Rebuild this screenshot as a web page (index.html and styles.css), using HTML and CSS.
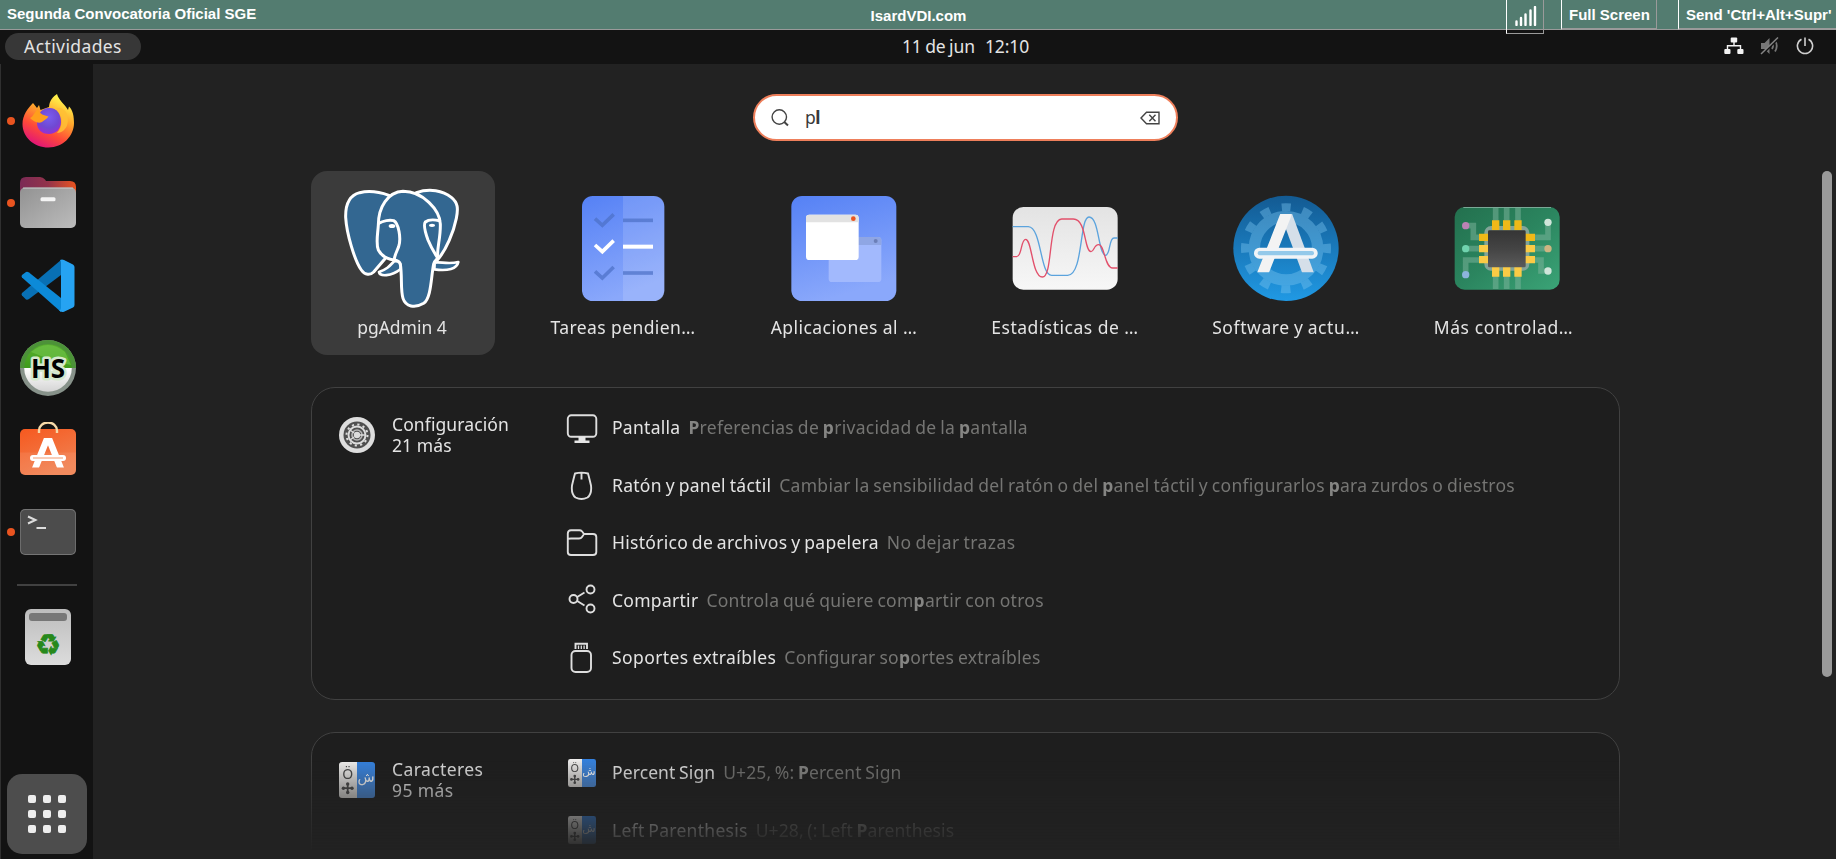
FILE: index.html
```html
<!DOCTYPE html>
<html lang="es">
<head>
<meta charset="utf-8">
<title>IsardVDI.com</title>
<link rel="stylesheet" href="styles.css">
</head>
<body>
<svg class="defs" width="0" height="0">
  <defs>
    <linearGradient id="blue" x1="0" y1="0" x2="0.3" y2="1"><stop offset="0" stop-color="#5581f5"/><stop offset="1" stop-color="#8aa8fb"/></linearGradient>
    <linearGradient id="orange" x1="0" y1="0" x2="0.5" y2="1"><stop offset="0" stop-color="#f6591f"/><stop offset="1" stop-color="#f08050"/></linearGradient>
    <linearGradient id="ff" x1="0.8" y1="0" x2="0.3" y2="1"><stop offset="0.1" stop-color="#fff04a"/><stop offset="0.4" stop-color="#ffa52c"/><stop offset="0.7" stop-color="#ff4a38"/><stop offset="1" stop-color="#e0127c"/></linearGradient>
    <radialGradient id="ffc" cx="0.5" cy="0.35" r="0.7"><stop offset="0" stop-color="#7a5cf0"/><stop offset="0.6" stop-color="#6f49d2"/><stop offset="1" stop-color="#a02ad0"/></radialGradient>
    <linearGradient id="folder" x1="0" y1="0" x2="1" y2="0"><stop offset="0" stop-color="#7b2a55"/><stop offset="0.5" stop-color="#93334b"/><stop offset="1" stop-color="#e95420"/></linearGradient>
    <linearGradient id="grey" x1="0" y1="0" x2="1" y2="1"><stop offset="0" stop-color="#929292"/><stop offset="1" stop-color="#bcbcbc"/></linearGradient>
    <linearGradient id="bin" x1="0" y1="0" x2="0" y2="1"><stop offset="0" stop-color="#bdbdbd"/><stop offset="1" stop-color="#dcdcdc"/></linearGradient>
    <linearGradient id="green" x1="0" y1="0" x2="0" y2="1"><stop offset="0" stop-color="#57b02c"/><stop offset="0.5" stop-color="#3f9a1c"/><stop offset="0.5" stop-color="#ffffff"/><stop offset="1" stop-color="#d4d4d4"/></linearGradient>
    <linearGradient id="sw" x1="0" y1="0" x2="0" y2="1"><stop offset="0" stop-color="#135a92"/><stop offset="1" stop-color="#2099e4"/></linearGradient>
    <linearGradient id="pcb" x1="0" y1="0" x2="1" y2="1"><stop offset="0" stop-color="#23704e"/><stop offset="0.5" stop-color="#2b855f"/><stop offset="1" stop-color="#3ba477"/></linearGradient>
    <linearGradient id="chip" x1="0" y1="0" x2="0" y2="1"><stop offset="0" stop-color="#353535"/><stop offset="0.5" stop-color="#444"/><stop offset="1" stop-color="#5a5a5a"/></linearGradient>
    <linearGradient id="stat" x1="0" y1="0" x2="0" y2="1"><stop offset="0" stop-color="#e3e3e3"/><stop offset="1" stop-color="#f7f7f7"/></linearGradient>
    <linearGradient id="cw" x1="0" y1="0" x2="0" y2="1"><stop offset="0" stop-color="#f6f5f4"/><stop offset="1" stop-color="#d0cecb"/></linearGradient>
    <linearGradient id="cb" x1="0" y1="0" x2="0" y2="1"><stop offset="0" stop-color="#3584e4"/><stop offset="1" stop-color="#4a86d0"/></linearGradient>
    <clipPath id="legs"><rect x="190" y="162" width="200" height="175"/></clipPath>
    <clipPath id="bag"><rect x="5" y="16" width="46" height="29.500"/></clipPath>
    <symbol id="chars" viewBox="0 0 36 36">
      <path d="M18 0H3Q0 0 0 3V33Q0 36 3 36H18Z" fill="url(#cw)"/><path d="M18 0H33Q36 0 36 3V33Q36 36 33 36H18Z" fill="url(#cb)"/>
      <text x="8.700" y="16.500" font-size="14" text-anchor="middle" fill="#4a4a4a" font-family="Noto Sans">Ö</text>
      <text x="27" y="20" font-size="14" text-anchor="middle" fill="#fff" font-family="DejaVu Sans">ش</text>
      <path d="M8.700 21.500V31M4 26.200H13.500" stroke="#4a4a4a" stroke-width="1.800"/><g fill="#4a4a4a"><circle cx="8.700" cy="22" r="1.700"/><circle cx="8.700" cy="30.500" r="1.700"/><circle cx="4.400" cy="26.200" r="1.700"/><circle cx="13" cy="26.200" r="1.700"/></g>
    </symbol>
  </defs>
</svg>

<header class="viewer-bar">
  <span class="viewer-name">Segunda Convocatoria Oficial SGE</span>
  <span class="viewer-title">IsardVDI.com</span>
  <div class="viewer-actions">
    <span class="signal"><svg width="22" height="20" viewBox="0 0 22 20"><path d="M1.500 19V15.500M6 19V12M10.500 19V8.500M15.500 19V4.500M20 19V1" stroke="#fff" stroke-width="2.400" stroke-linecap="round"/></svg></span>
    <span class="vbtn vbtn-full">Full Screen</span>
    <span class="vbtn vbtn-send">Send 'Ctrl+Alt+Supr'</span>
  </div>
</header>

<nav class="panel">
  <span class="activities">Actividades</span>
  <span class="clock"><span>11 de jun</span><span>12:10</span></span>
  <span class="status">
    <svg width="20" height="18" viewBox="0 0 20 18"><g fill="#f2f2f2"><rect x="6.700" y="0.500" width="6.500" height="5" rx="1"/><rect x="0.300" y="12" width="6.200" height="5" rx="1"/><rect x="13.300" y="12" width="6.200" height="5" rx="1"/></g><path d="M10 5V8.700M3.500 12V8.700H16.500V12" fill="none" stroke="#f2f2f2" stroke-width="1.400"/></svg>
    <svg width="20" height="18" viewBox="0 0 20 18"><path d="M1 6H4.500L9.500 1V17L4.500 12H1Z" fill="#777"/><path d="M12 6Q14 9 12 12M15 3.500Q18.500 9 15 14.500" fill="none" stroke="#777" stroke-width="1.800"/><path d="M2 17.500L18.500 1.500" stroke="#131313" stroke-width="2"/><path d="M1 17L18 0.500" stroke="#858585" stroke-width="1.500"/></svg>
    <svg width="18" height="18" viewBox="0 0 18 18"><path d="M5.500 2.200A7.600 7.600 0 1 0 12.500 2.200M9 0.500V9" fill="none" stroke="#cfcfcf" stroke-width="1.600"/></svg>
  </span>
</nav>

<div class="desktop">
  <aside class="dock">
    <div class="dock-item running"><svg width="56" height="56" viewBox="0 0 56 56">
      <path d="M37 1C30 6 29.500 10 29 14L20.500 17L19 12L17 15L13 10C8 15 2.500 22 2.500 31C2.500 44 14 54.500 28.500 54.500C43 54.500 54 43 54 30C54 24 53 17 49 13.500L48 17C45 11 39 8 37 1Z" fill="url(#ff)"/>
      <path d="M28 15C36 14 41 20 41 29C41 36 36 41 29 41C21 41 17 36 17 30C18 22 20 16 28 15Z" fill="url(#ffc)"/>
      <path d="M18 16C20 22 24 22 28.500 23.500C27 26 24 27 22 29C18 31 13 28 10 25C14 23 14 19 18 16Z" fill="#ff9f1c"/><path d="M35 16C44 21 43 34 37 40C48 39 50 27 46 19C42 14 39 14 35 16Z" fill="#ffbf35" opacity=".85"/></svg></div>
    <div class="dock-item running"><svg width="56" height="56" viewBox="0 0 56 56"><path d="M0 8Q0 2 6 2H20Q23 2 25 4.500L26 6H50Q56 6 56 12V30H0Z" fill="url(#folder)"/><rect x="0" y="12.500" width="56" height="40.500" rx="5" fill="url(#grey)"/><path d="M3 13.100H53" stroke="#c8c8c8"/><rect x="20.500" y="22.300" width="15" height="4" rx="1.500" fill="#f4f4f4"/></svg></div>
    <div class="dock-item"><svg width="56" height="56" viewBox="0 0 56 56"><path d="M41 2L2 35Q1 36 2 37.500L6 41.500Q7.500 42 9 41L41 17Z" fill="#0870b5"/><path d="M41 54L2 19.500Q1 18 2 17L6 14Q7.500 13.500 9 14.500L41 40Z" fill="#0c8ad8"/><path d="M40 2Q42 1 44 2L53 6.500Q54.500 7.500 54.500 9V47Q54.500 48.500 53 49.500L44 53.700Q41 54.500 39 52.500Q41 52 41 50V5Q41 3 40 2Z" fill="#26a3f2"/></svg></div>
    <div class="dock-item"><svg width="56" height="56" viewBox="0 0 56 56"><circle cx="28" cy="28" r="28" fill="#87928a"/><path d="M0 28A28 28 0 0 1 56 28Z" fill="#4c9238"/><circle cx="28" cy="28" r="23.800" fill="url(#green)"/><path d="M11 12Q28 -2 45 12L51 25Q35 22 11 12Z" fill="#73c44d" opacity=".6"/><text x="28" y="37.500" text-anchor="middle" font-family="Open Sans" font-weight="700" font-size="26" fill="#000" stroke="#d5e8cd" stroke-width="5" stroke-linejoin="round" paint-order="stroke">HS</text></svg></div>
    <div class="dock-item"><svg width="56" height="56" viewBox="0 0 56 56"><rect y="7" width="56" height="46" rx="5" fill="url(#orange)"/><path d="M0 30.500H56V48Q56 53 51 53H5Q0 53 0 48Z" fill="#fff" opacity=".08"/><path d="M19 11V8.500A9 8 0 0 1 37 8.500V11" fill="none" stroke="#f5d9a8" stroke-width="2.400"/><g clip-path="url(#bag)"><path d="M15 47L27 17H29L41 47" fill="none" stroke="#fff" stroke-width="6.500" stroke-linejoin="bevel"/></g><path d="M13 36H43" stroke="#fff" stroke-width="6" stroke-linecap="round"/><path d="M13 36H43" stroke="#f7b89a" stroke-width="1.400"/></svg></div>
    <div class="dock-item running"><svg width="56" height="56" viewBox="0 0 56 56"><rect y="5" width="56" height="46" rx="5" fill="#757575"/><rect x=".8" y="6" width="54.400" height="44" rx="4.500" fill="#4c4c4c"/><path d="M8 12.500L15.500 16L8 19.500" fill="none" stroke="#dcdcdc" stroke-width="2"/><path d="M16.500 24H26" stroke="#dcdcdc" stroke-width="2"/></svg></div>
    <div class="dock-sep"></div>
    <div class="dock-item trash"><svg width="56" height="56" viewBox="0 0 56 56"><rect x="5" width="46" height="56" rx="6" fill="url(#bin)"/><rect x="9" y="4" width="38" height="8" rx="3" fill="#777"/><text x="28" y="45.500" text-anchor="middle" font-family="DejaVu Sans" font-size="29" fill="#26891b" stroke="#26891b" stroke-width=".8">♻</text></svg></div>
    <div class="apps-button"><svg width="38" height="38" viewBox="0 0 38 38" fill="#eee"><rect width="8" height="8" rx="2"/><rect x="15" width="8" height="8" rx="2"/><rect x="30" width="8" height="8" rx="2"/><rect y="15" width="8" height="8" rx="2"/><rect x="15" y="15" width="8" height="8" rx="2"/><rect x="30" y="15" width="8" height="8" rx="2"/><rect y="30" width="8" height="8" rx="2"/><rect x="15" y="30" width="8" height="8" rx="2"/><rect x="30" y="30" width="8" height="8" rx="2"/></svg></div>
  </aside>

  <main class="overview">
    <div class="search">
      <svg width="18" height="18" viewBox="0 0 18 18" fill="none" stroke="#444" stroke-width="1.400"><circle cx="8.300" cy="8" r="7.200"/><path d="M13 12.700L17 16.500" stroke-width="2"/></svg>
      <span class="query">p<b>l</b></span>
      <svg width="20" height="14" viewBox="0 0 20 14" fill="none" stroke="#444" stroke-width="1.400"><path d="M1 7L6.500 1.200H19V12.800H6.500Z"/><path d="M9.300 3.700L15.500 10.300M15.500 3.700L9.300 10.300"/></svg>
    </div>

    <div class="results">
      <div class="apps">
        <div class="app selected"><svg width="120" height="120" viewBox="127 84 360 360" fill="#336791" stroke="#fff" stroke-width="9" stroke-linejoin="round" stroke-linecap="round">
          <path d="M268 106C240 96 205 92 180 98C150 106 137 130 138 172C141 222 165 302 185 330C196 346 212 346 222 336L256 296L300 200Z"/>
          <path d="M350 98C390 84 430 92 455 112C475 128 476 145 470 175C462 215 440 270 413 300L380 200Z"/>
          <path d="M302 312C308 350 302 390 310 415C318 440 345 446 372 430C395 415 394 350 402 312C408 295 415 300 414 290C412 260 423 235 422 192C420 150 370 94 310 94C265 96 236 140 236 195C234 225 228 250 236 270C246 288 260 298 285 300C295 302 300 306 302 312Z"/>
          <path d="M238 190C250 182 270 179 282 182C297 190 305 235 297 260C290 278 284 288 284 298" fill="none"/>
          <path d="M420 182C405 179 385 179 377 186C370 195 376 215 385 240C394 262 405 280 414 294" fill="none"/>
          <path d="M283 304C270 318 262 328 238 336C240 350 275 350 302 328C304 308 298 302 283 304Z" stroke-width="8"/>
          <path d="M405 308C420 304 445 314 476 306C472 326 445 334 404 328Z" stroke-width="8"/>
          <g fill="#fff" stroke="none"><ellipse cx="277" cy="198" rx="10" ry="6"/><ellipse cx="397" cy="196" rx="9" ry="5"/></g></svg>
          <span>pgAdmin 4</span></div>
        <div class="app"><svg width="120" height="120" viewBox="789 84 360 360"><rect x="846" y="108" width="247" height="315" rx="32" fill="url(#blue)"/><path d="M969 108H1061Q1093 108 1093 140V391Q1093 423 1061 423H969Z" fill="#fff" opacity=".13"/>
          <g fill="none" stroke-width="11"><g stroke="#4c70c6" opacity=".7"><path d="M885 176L907 196L941 163"/><path d="M969 181H1059"/><path d="M885 334L907 354L941 321"/><path d="M969 339H1059"/></g><g stroke="#fff"><path d="M885 255L907 275L941 242"/><path d="M969 260H1059" stroke-width="12"/></g></g></svg>
          <span class="cut-2">Tareas pendien…</span></div>
        <div class="app"><svg width="120" height="120" viewBox="133 324 360 360"><rect x="155" y="348" width="315" height="315" rx="32" fill="url(#blue)"/><rect x="267" y="471" width="158" height="135" rx="10" fill="#a2b9fd"/><path d="M267 495V481Q267 471 277 471H415Q425 471 425 481V495Z" fill="#8fa6e4"/><circle cx="408" cy="483" r="6" fill="#6b7fb8"/><rect x="199" y="404" width="158" height="136" rx="10" fill="#fff"/><path d="M199 427V414Q199 404 209 404H347Q357 404 357 414V427Z" fill="#e2e2e2"/><circle cx="341" cy="416" r="7" fill="#e95420"/></svg>
          <span class="cut-3">Aplicaciones al …</span></div>
        <div class="app"><svg width="120" height="120" viewBox="795 324 360 360" fill="none" stroke-width="4"><rect x="818" y="381" width="315" height="248" rx="32" fill="url(#stat)"/><path d="M818 440H865C905 442 900 586 935 586H983C1030 586 1018 411 1047 411C1078 411 1074 524 1097 526C1112 524 1106 474 1122 474H1133" stroke="#5ba3dd"/><path d="M818 530H830C846 530 842 478 857 478C876 478 876 591 907 591C940 591 922 420 965 417H1000C1040 417 1032 514 1053 515C1062 515 1062 494 1076 494C1094 494 1094 564 1118 564H1133" stroke="#e2506b"/></svg>
          <span class="cut-4">Estadísticas de …</span></div>
        <div class="app"><svg width="120" height="120" viewBox="109 84 360 360"><circle cx="289" cy="265" r="158" fill="url(#sw)"/>
          <g opacity=".42" fill="none" stroke="#79c4f0"><circle cx="289" cy="265" r="95" stroke-width="34"/><circle cx="289" cy="265" r="123" stroke-width="24" stroke-dasharray="28 36.400" stroke-dashoffset="14" transform="rotate(-90 289 265)"/></g>
          <g clip-path="url(#legs)"><path d="M358 346L292 168" stroke="#d5dfe9" stroke-width="33"/><path d="M217 346L287 168L293 150" fill="none" stroke="#f3f3f3" stroke-width="33"/></g><rect x="193" y="263" width="191" height="33" rx="16" fill="#f1f4f7"/><rect x="204" y="273" width="169" height="13" rx="6" fill="#94c9ea"/></svg>
          <span class="cut-5">Software y actu…</span></div>
        <div class="app"><svg width="120" height="120" viewBox="772 84 360 360"><rect x="795" y="141" width="315" height="248" rx="30" fill="url(#pcb)"/><path d="M821 142.500H1084" stroke="#79a996" stroke-width="3"/>
          <g fill="none" stroke="#80b59e" stroke-opacity=".5" stroke-width="17"><path d="M918 143V190M951 143V190M985 143V190M918 345V387M951 345V387M985 345V387M828 197H851V232H880M828 266H880M828 344V300H880M1075 187V232H1025M1075 266H1025M1075 333H1054V300H1025"/></g>
          <rect x="884" y="198" width="135" height="134" rx="20" fill="#83a498"/><path d="M907 181h22v30h-22zM940 181h22v30h-22zM974 181h22v30h-22zM868 221h30v22h-30zM1006 221h30v22h-30z" fill="#efb918"/><path d="M907 320h22v30h-22zM940 320h22v30h-22zM974 320h22v30h-22zM868 255h30v22h-30zM868 288h30v22h-30zM1006 255h30v22h-30zM1006 288h30v22h-30z" fill="#fbcb45"/><rect x="895" y="211" width="113" height="111" rx="4" fill="url(#chip)"/>
          <circle cx="828" cy="197" r="11" fill="#bd82b5"/><circle cx="828" cy="266" r="11" fill="#70d3ae"/><circle cx="828" cy="344" r="11" fill="#8db4dc"/><circle cx="1075" cy="187" r="11" fill="#d0e5da"/><circle cx="1075" cy="266" r="11" fill="#cdb582"/><circle cx="1075" cy="333" r="11" fill="#d0e5da"/></svg>
          <span class="cut-6">Más controlad…</span></div>
      </div>

      <section class="card">
        <div class="provider">
          <svg width="36" height="36" viewBox="0 0 36 36"><circle cx="18" cy="18" r="18" fill="#dedede"/><circle cx="18" cy="18" r="13.500" fill="#4f4f4f"/><g fill="none" stroke="#dcdcdc"><circle cx="18" cy="18" r="8.500" stroke-width="1.900"/><circle cx="18" cy="18" r="10.500" stroke-width="2" stroke-dasharray="2.200 3.298"/><circle cx="18" cy="18" r="5" stroke-width="1.600" stroke="#b5b5b5"/><path d="M11 13L15 16M11 23L15 20M21 18H26" stroke-width="1.300"/></g><circle cx="18" cy="18" r="3.200" fill="#dcdcdc"/></svg>
          <div class="provider-name"><div>Configuración</div><div>21 más</div></div>
        </div>
        <ul class="rows">
          <li><svg width="32" height="32" viewBox="0 0 32 32"><rect x="1.800" y="3.300" width="28.500" height="21.500" rx="3.500" fill="none" stroke="#dedede" stroke-width="1.900"/><path d="M12.500 25H19.500V28.500H23.500V31H8.500V28.500H12.500Z" fill="#e6e6e6"/></svg><span class="name">Pantalla</span><span class="desc"><b>P</b>referencias de <b>p</b>rivacidad de la <b>p</b>antalla</span></li>
          <li><svg width="32" height="32" viewBox="0 0 32 32" fill="none" stroke="#dedede" stroke-width="1.900"><path d="M9 4.500Q15.500 2.700 22 4.500Q23 8 25 16.500Q26 25 21.500 28.500Q15.500 31.500 9.500 28.500Q5 25 6 16.500Q8 8 9 4.500ZM15.500 4V10.500"/></svg><span class="name">Ratón y panel táctil</span><span class="desc">Cambiar la sensibilidad del ratón o del <b>p</b>anel táctil y configurarlos <b>p</b>ara zurdos o diestros</span></li>
          <li><svg width="32" height="32" viewBox="0 0 32 32" fill="none" stroke="#dedede" stroke-width="1.900"><path d="M1.800 9V25Q1.800 28 5 28H27Q30.300 28 30.300 25V10Q30.300 7 27 7H18L16 4.300Q15 3.300 13.500 3.300H5Q1.800 3.300 1.800 6.500V12Q2.500 11.500 5 11.500H13Q15 11.500 16 10L18 7"/></svg><span class="name">Histórico de archivos y papelera</span><span class="desc wide">No dejar trazas</span></li>
          <li><svg width="32" height="32" viewBox="0 0 32 32" fill="none" stroke="#dedede" stroke-width="1.900"><circle cx="7.500" cy="15" r="4"/><circle cx="24.500" cy="5.500" r="4"/><circle cx="24.500" cy="24.500" r="4"/><path d="M11.200 13L18.500 8.500M11.200 17L18.500 21.500"/></svg><span class="name">Compartir</span><span class="desc">Controla qué quiere com<b>p</b>artir con otros</span></li>
          <li><svg width="32" height="32" viewBox="0 0 32 32" fill="none" stroke="#dedede" stroke-width="1.900"><rect x="5.500" y="9" width="19.500" height="21" rx="4"/><path d="M9.500 7V1.700H21V7"/><path d="M12.500 3.500V7M15.300 3.500V7M18.100 3.500V7" stroke-width="1.300"/></svg><span class="name wide">Soportes extraíbles</span><span class="desc">Configurar so<b>p</b>ortes extraíbles</span></li>
        </ul>
      </section>

      <section class="card">
        <div class="provider">
          <svg width="36" height="36"><use href="#chars" width="36" height="36"/></svg>
          <div class="provider-name wide"><div>Caracteres</div><div>95 más</div></div>
        </div>
        <ul class="rows">
          <li><svg width="32" height="28"><use href="#chars" x="2" width="28" height="28"/></svg><span class="name tight">Percent Sign</span><span class="desc tight">U+25, %: <b>P</b>ercent Sign</span></li>
          <li><svg width="32" height="28"><use href="#chars" x="2" width="28" height="28"/></svg><span class="name">Left Parenthesis</span><span class="desc tight">U+28, (: Left <b>P</b>arenthesis</span></li>
        </ul>
      </section>
    </div>
    <div class="scrollbar"></div>
  </main>
</div>
</body>
</html>
```
FILE: styles.css
```css
* { box-sizing: border-box; }
body {
  margin: 0;
  width: 1836px;
  height: 859px;
  overflow: hidden;
  background: #131313;
  color: #e4e4e4;
  font: 17.5px/21px "Noto Sans", sans-serif;
  display: flex;
  flex-direction: column;
}
svg { display: block; flex: none; }
.defs { position: absolute; }

/* remote viewer bar */
.viewer-bar {
  flex: none;
  height: 30px;
  display: grid;
  grid-template-columns: 1fr auto 1fr;
  background: #537c70;
  border-bottom: 1px solid #9a9a9a;
  color: #fff;
  font: bold 15px/17px "Liberation Sans", Arial, sans-serif;
}
.viewer-name { padding: 5px 0 0 7px; }
.viewer-title { padding: 7px 0 0 1px; }
.viewer-actions { display: flex; justify-content: flex-end; }
.signal {
  width: 38px;
  height: 34px;
  margin-right: 17px;
  padding: 6px 0 0 8px;
  border: solid #9a9a9a;
  border-width: 0 1px 1px;
  border-left-color: #fff;
  position: relative;
}
.vbtn {
  height: 30px;
  padding: 6px 0 0 7px;
  border: solid #9a9a9a;
  border-width: 0 1px 2px;
  border-left-color: #fff;
  white-space: nowrap;
}
.vbtn-full { width: 96px; margin-right: 21px; }
.vbtn-send { width: 158px; border-right: 0; }

/* desktop top panel */
.panel {
  flex: none;
  height: 34px;
  display: grid;
  grid-template-columns: 141px 1fr 141px;
  align-items: center;
}
.activities {
  width: 136px;
  height: 27px;
  margin: 0 0 1px 5px;
  border-radius: 14px;
  background: #373737;
  text-align: center;
  line-height: 27px;
  letter-spacing: 0.4px;
}
.clock {
  display: flex;
  justify-content: center;
  gap: 10px;
  padding: 0 0 1px 95px;
  word-spacing: -1px;
  letter-spacing: -0.1px;
}
.status { display: flex; gap: 16px; align-items: center; justify-content: flex-end; padding: 0 22px 2px 0; }

.desktop { flex: 1; display: flex; min-height: 0; }

/* dock */
.dock {
  width: 93px;
  padding: 29px 0 0;
  border-left: 1px solid #303030;
  display: flex;
  flex-direction: column;
  align-items: center;
}
.dock-item { position: relative; left: 0.5px; width: 56px; height: 56px; margin-bottom: 26.300px; flex: none; }
.running::before {
  content: "";
  position: absolute;
  left: -12.500px;
  top: 24px;
  width: 8px;
  height: 8px;
  border-radius: 50%;
  background: #e95420;
}
.dock-sep { width: 60px; height: 2px; background: #414141; margin-bottom: 23px; margin-top: -2.500px; flex: none; }
.apps-button {
  width: 80px;
  height: 80px;
  margin: auto 0 5px;
  border-radius: 15px;
  background: #4d4d4d;
  display: grid;
  place-items: center;
  flex: none;
}

/* overview */
.overview {
  flex: 1;
  min-width: 0;
  padding: 30px 0 0 2px;
  background: #222;
  position: relative;
  display: flex;
  flex-direction: column;
  align-items: center;
}
.search {
  width: 425px;
  height: 47px;
  border: 2.500px solid #ee7f5b;
  border-radius: 24px;
  background: #fff;
  color: #3a3a3a;
  display: flex;
  align-items: center;
  padding: 0 16px;
}
.query { flex: 1; padding-left: 16px; }
.query b { margin-left: -0.500px; }
.results {
  width: 1309px;
  height: 679px;
  margin-top: 30px;
  overflow: hidden;
  -webkit-mask-image: linear-gradient(#000 585px, transparent 682px);
  mask-image: linear-gradient(#000 585px, transparent 682px);
}
.apps { display: flex; gap: 37px; }
.app {
  width: 184px;
  height: 184px;
  border-radius: 16px;
  padding: 17px 2px 0 0;
  display: flex;
  flex-direction: column;
  align-items: center;
  gap: 8.500px;
  white-space: nowrap;
}
.selected { background: #3b3b3b; }
.cut-2 { letter-spacing: 0.4px; }
.cut-3 { letter-spacing: 0.450px; }
.cut-4 { letter-spacing: 0.500px; }
.cut-5 { letter-spacing: 0.600px; word-spacing: -1px; }
.cut-6 { letter-spacing: 0.600px; margin-right: 7px; }
.card {
  height: 313px;
  margin-top: 32px;
  border: 1.500px solid #414141;
  border-radius: 24px;
  background: #1e1e1e;
  display: flex;
}
.provider { width: 254px; padding: 26px 0 0 27px; display: flex; gap: 17px; align-items: flex-start; }
.provider svg { margin-top: 2.500px; }
.provider-name { letter-spacing: 0.100px; }
.rows { list-style: none; margin: 0; padding: 11px 0 0; }
.rows li { display: flex; align-items: center; height: 57.500px; white-space: nowrap; }
.name { margin-left: 14px; letter-spacing: 0.280px; word-spacing: -1px; }
.desc { margin-left: 8px; color: #757573; letter-spacing: 0.280px; word-spacing: -1px; }
.desc b { color: #858583; }
.wide { letter-spacing: 0.400px; }
.tight { letter-spacing: 0.100px; }
.scrollbar {
  position: absolute;
  right: 4px;
  top: 107px;
  width: 10px;
  height: 506px;
  border-radius: 5px;
  background: #9a9a9a;
}
```
